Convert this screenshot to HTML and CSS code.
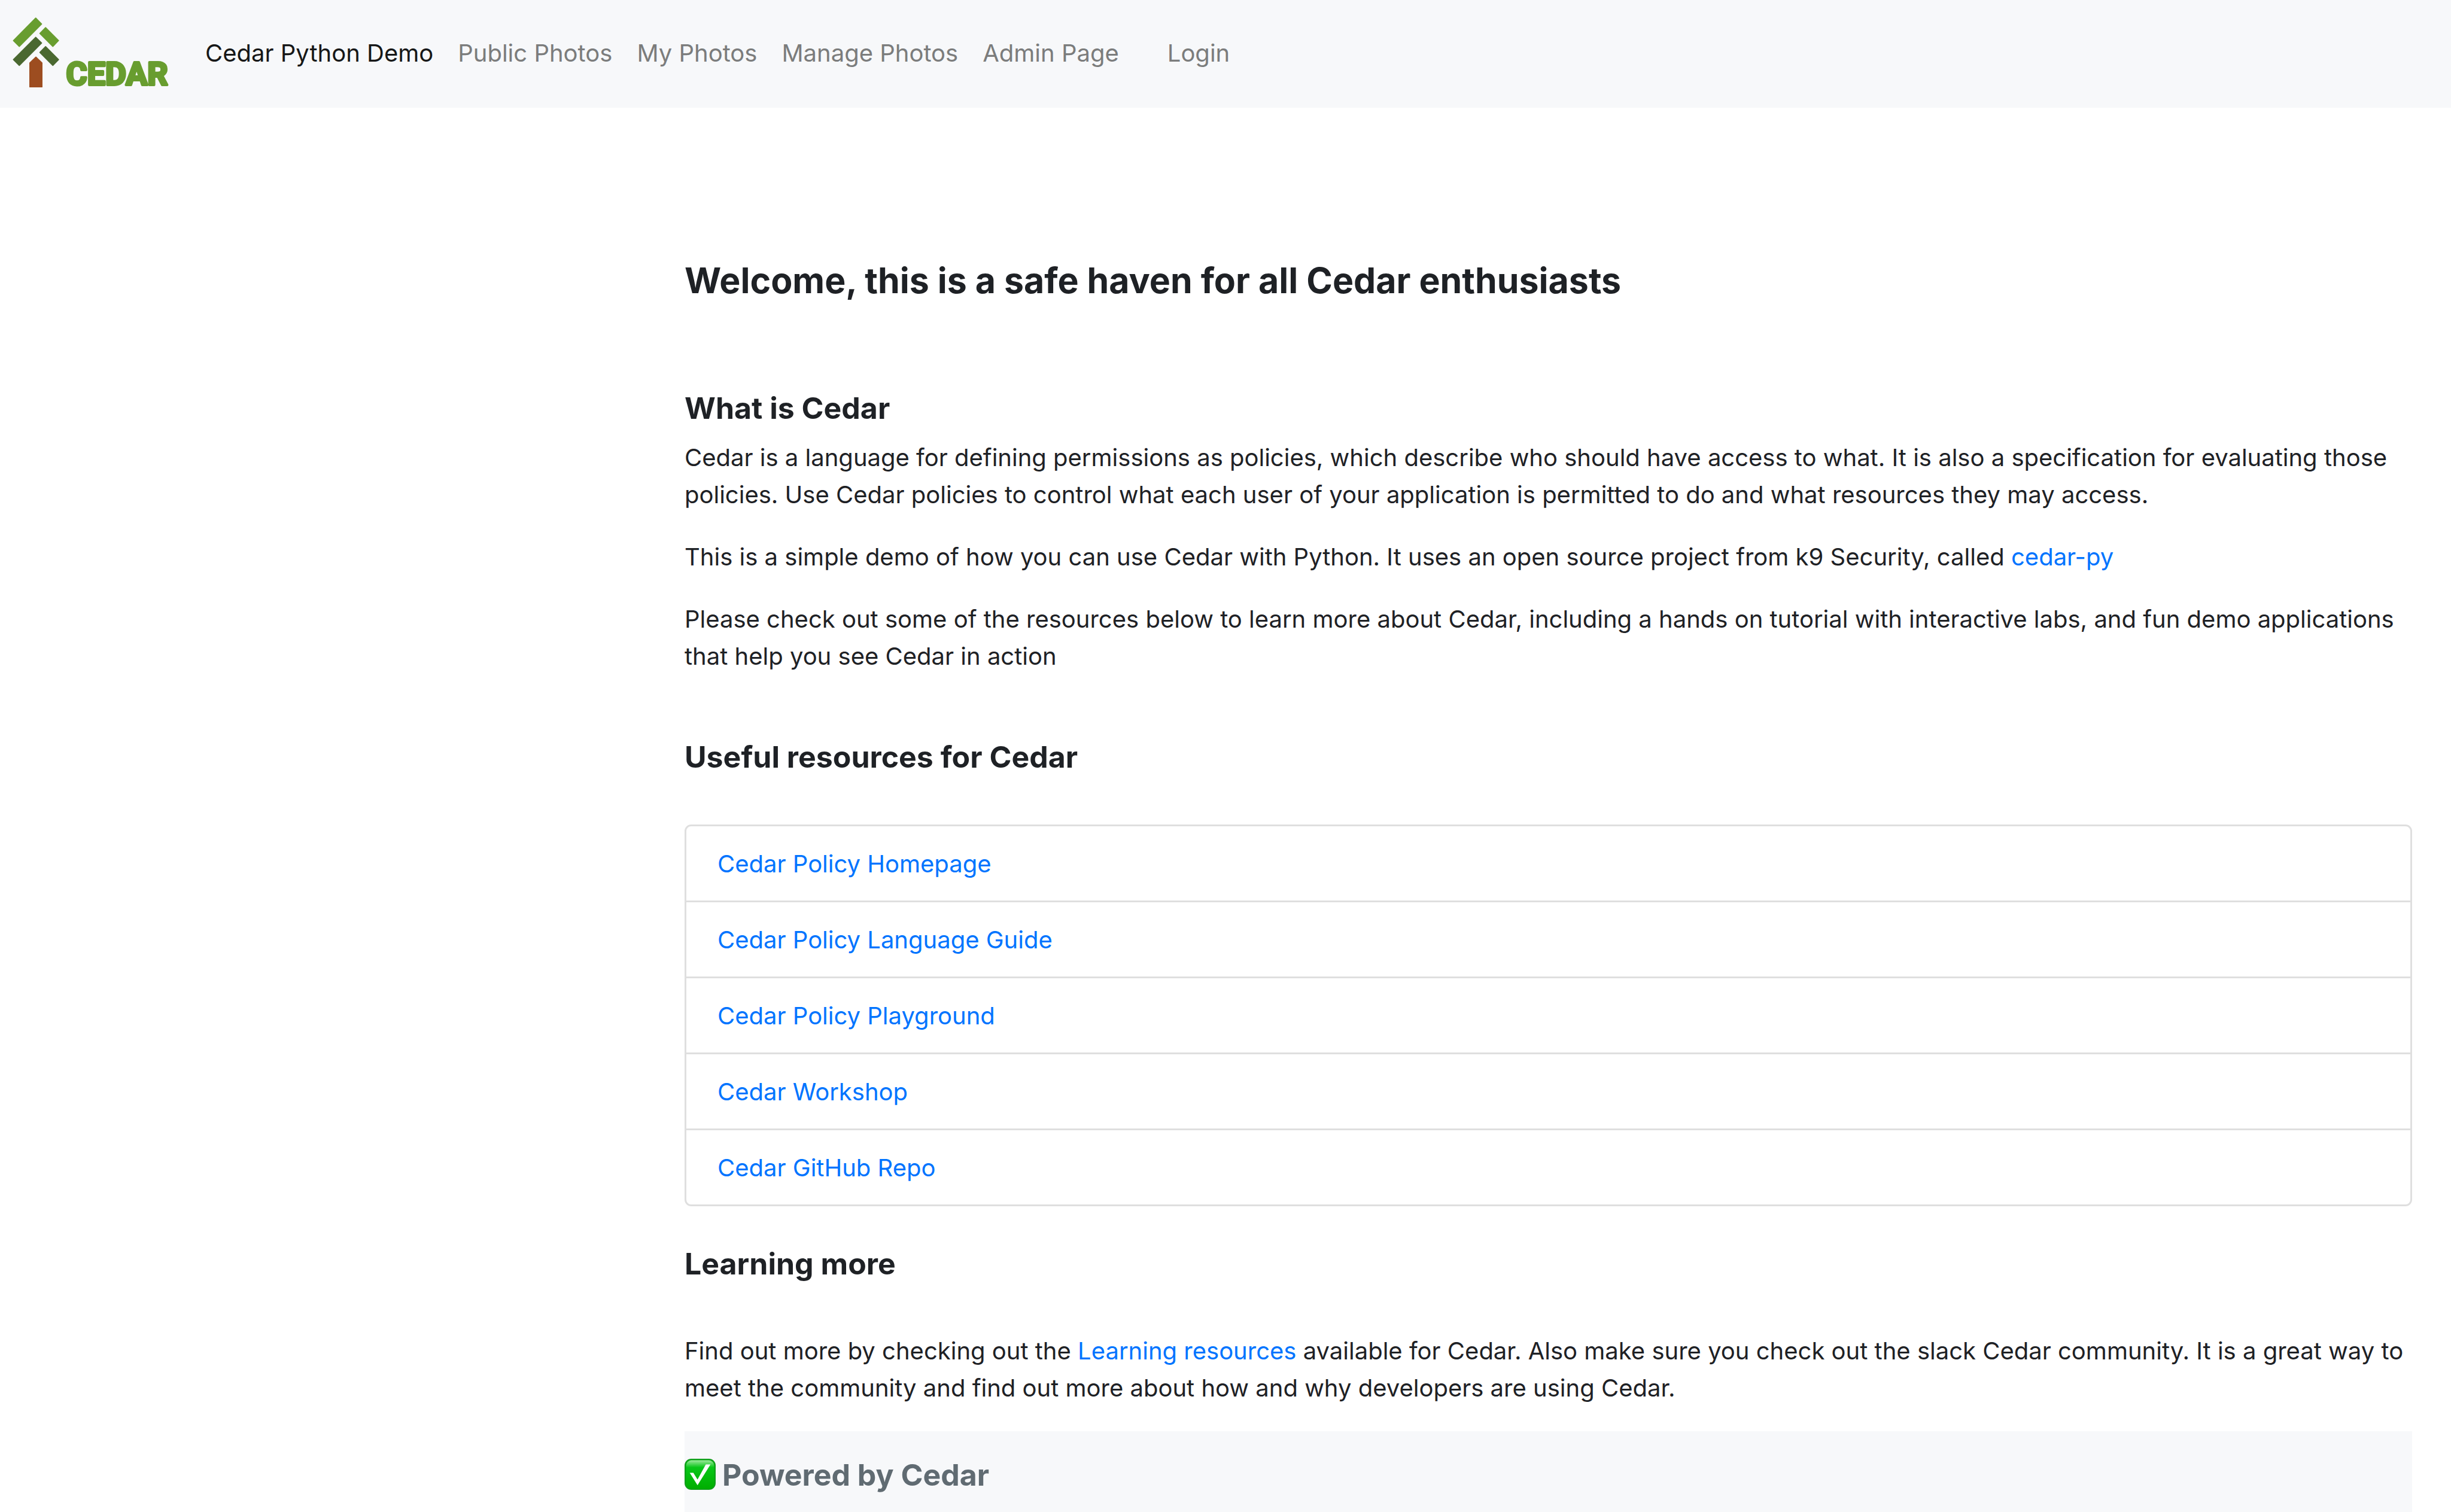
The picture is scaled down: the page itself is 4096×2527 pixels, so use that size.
FILE: index.html
```html
<!DOCTYPE html>
<html lang="en">
<head>
<meta charset="utf-8">
<meta name="viewport" content="width=device-width, initial-scale=1">
<title>Cedar Python Demo</title>
<link rel="stylesheet" href="styles.css">
</head>
<body>
<nav class="navbar">
  <a class="logo" href="#" aria-label="Cedar home">
    <svg class="logo-art" viewBox="72 98 900 415" aria-hidden="true">
      <g class="leaf-light">
        <path d="M206 102L240 136L111 266L77 232Z"/>
        <path d="M263 157L338 232L305 266L230 191Z"/>
      </g>
      <g class="leaf-dark">
        <path d="M206 213L240 246L111 376L77 342Z"/>
        <path d="M263 267L338 342L305 376L230 301Z"/>
      </g>
      <path class="trunk" d="M207 328L242 361V500H172V361Z"/>
      <text class="wordmark" x="382" y="488">CEDAR</text>
    </svg>
  </a>
  <ul class="nav-list">
    <li><a class="nav-link active" href="#">Cedar Python Demo</a></li>
    <li><a class="nav-link" href="#">Public Photos</a></li>
    <li><a class="nav-link" href="#">My Photos</a></li>
    <li><a class="nav-link" href="#">Manage Photos</a></li>
    <li><a class="nav-link" href="#">Admin Page</a></li>
  </ul>
  <a class="nav-link login" href="#">Login</a>
</nav>
<main class="content">
  <h1 class="title">Welcome, this is a safe haven for all Cedar enthusiasts</h1>
  <section class="section">
    <h2 class="heading">What is Cedar</h2>
    <p>Cedar is a language for defining permissions as policies, which describe who should have access to what. It is also a specification for evaluating those policies. Use Cedar policies to control what each user of your application is permitted to do and what resources they may access.</p>
    <p>This is a simple demo of how you can use Cedar with Python. It uses an open source project from k9 Security, called <a href="#">cedar-py</a></p>
    <p>Please check out some of the resources below to learn more about Cedar, including a hands on tutorial with interactive labs, and fun demo applications that help you see Cedar in action</p>
  </section>
  <section class="resources">
    <h2 class="heading">Useful resources for Cedar</h2>
    <ul class="link-list">
      <li><a href="#">Cedar Policy Homepage</a></li>
      <li><a href="#">Cedar Policy Language Guide</a></li>
      <li><a href="#">Cedar Policy Playground</a></li>
      <li><a href="#">Cedar Workshop</a></li>
      <li><a href="#">Cedar GitHub Repo</a></li>
    </ul>
  </section>
  <section class="learning">
    <h2 class="heading">Learning more</h2>
    <p>Find out more by checking out the <a href="#">Learning resources</a> available for Cedar. Also make sure you check out the slack Cedar community. It is a great way to meet the community and find out more about how and why developers are using Cedar.</p>
  </section>
  <footer class="footer">
    <svg class="check" viewBox="0 0 60 60" aria-hidden="true">
      <defs>
        <linearGradient id="gloss" x1="0" y1="0" x2="0" y2="1">
          <stop offset="0" stop-color="#9be89b"/>
          <stop offset="0.25" stop-color="#08c618"/>
          <stop offset="1" stop-color="#00ae00"/>
        </linearGradient>
      </defs>
      <rect x="1" y="1" width="58" height="58" rx="12" fill="#04b010" stroke="#129c1c" stroke-width="2"/>
      <rect x="3" y="3" width="54" height="55" rx="10" fill="url(#gloss)"/>
      <path fill="#fff" d="M10 27H17L25 40L41 11H50L25 51Z"/>
    </svg>
    <h2 class="heading">Powered by Cedar</h2>
  </footer>
</main>
</body>
</html>
```
FILE: styles.css
```css
* {
  box-sizing: border-box;
}

body {
  display: flex;
  flex-direction: column;
  min-height: 100vh;
  margin: 0;
  background: #fff;
  color: #1e2125;
  font: 400 40px/62px Inter, "Liberation Sans", sans-serif;
}

a {
  color: #0074ff;
  text-decoration: none;
}

p,
h1,
h2,
ul {
  margin: 0;
  padding: 0;
}

/* Top bar */
.navbar {
  display: flex;
  align-items: center;
  height: 180px;
  padding: 0 21px 3px;
  background: #f7f8fa;
}

.logo {
  display: flex;
  margin-right: 62px;
}

.logo-art {
  width: 260px;
  height: 120px;
  overflow: visible;
}

.leaf-light,
.leaf-dark,
.trunk {
  stroke-width: 6px;
  stroke-linejoin: round;
}

.leaf-light {
  fill: #689d2f;
  stroke: #689d2f;
}

.leaf-dark {
  fill: #4a6830;
  stroke: #4a6830;
}

.trunk {
  fill: #9d4d20;
  stroke: #9d4d20;
}

.wordmark {
  fill: #689d2f;
  stroke: #689d2f;
  stroke-width: 14px;
  stroke-linejoin: round;
  font: 700 186px Roboto, "Liberation Sans", sans-serif;
}

.nav-list {
  display: flex;
  gap: 41px;
  list-style: none;
}

.nav-link {
  color: #7b7c7c;
}

.nav-link.active {
  color: #161717;
}

.login {
  margin-left: 81px;
}

/* Page body */
.content {
  display: flex;
  flex: 1;
  flex-direction: column;
  margin: 0 65px 0 1144px;
}

.title {
  margin: 251px 0 145px;
  font-size: 59px;
  font-weight: 700;
  line-height: 75px;
}

.heading {
  font-size: 50px;
  font-weight: 700;
  line-height: 62px;
}

.section {
  display: flex;
  flex-direction: column;
  gap: 42px;
}

.section .heading {
  margin-bottom: -21px;
}

.resources {
  margin-top: 106px;
}

.link-list {
  margin-top: 82px;
  border: 3px solid #dfdfdf;
  border-radius: 11px;
  list-style: none;
}

.link-list li {
  padding: 32px 52px 30px;
}

.link-list li + li {
  border-top: 3px solid #dfdfdf;
}

.learning {
  margin-top: 65px;
}

.learning p {
  margin: 84px 0 41px;
}

.footer {
  display: flex;
  flex: 1;
  gap: 11px;
  align-items: flex-start;
  padding-top: 42px;
  background: #f7f8fa;
  color: #606b72;
}

.check {
  width: 52px;
  height: 52px;
  margin-top: 4px;
}
```
